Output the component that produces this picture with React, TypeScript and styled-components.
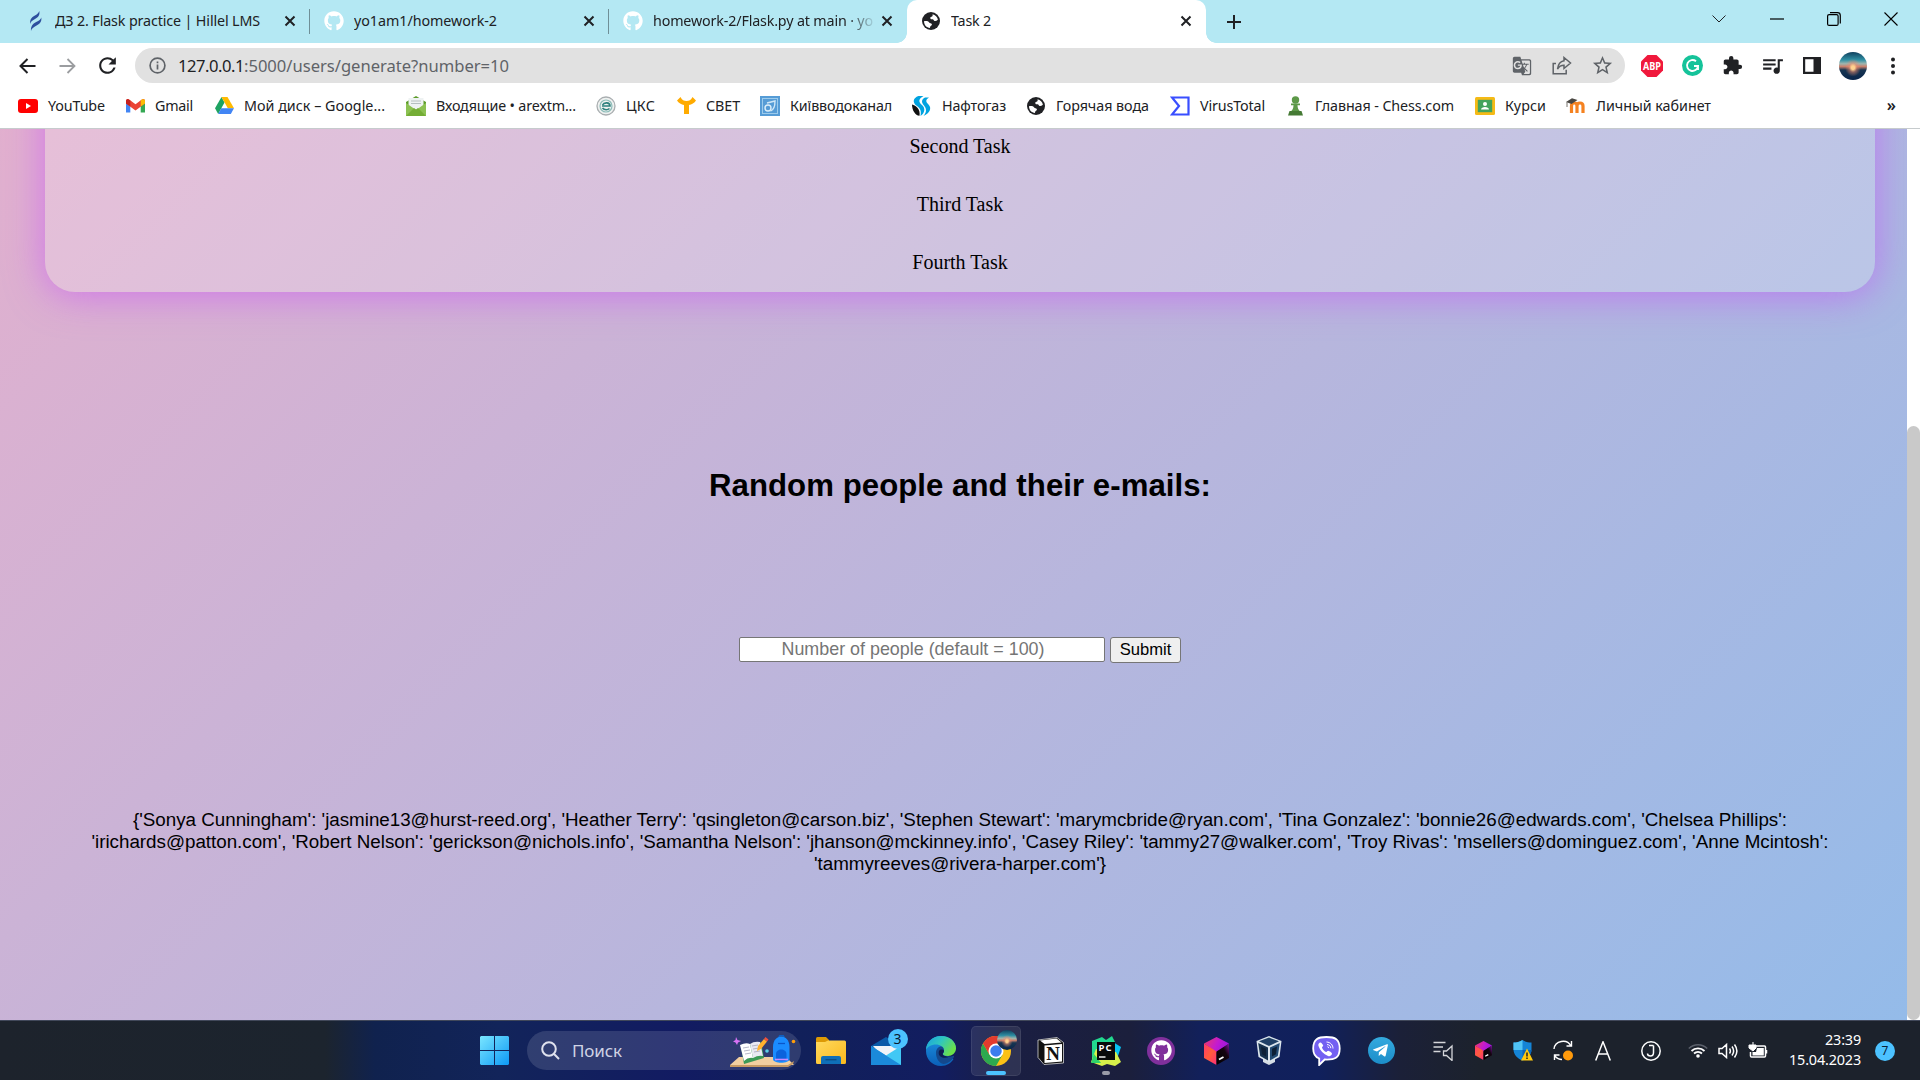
import React, { useLayoutEffect, useRef, useState } from "react";
import styled, { createGlobalStyle, css } from "styled-components";
import { FaGithub, FaTelegramPlane } from "react-icons/fa";
import { MdExtension, MdQueueMusic, MdStarBorder, MdGTranslate, MdRefresh } from "react-icons/md";

const UI = `"Noto Sans", "Open Sans", sans-serif`;
const ARIAL = `"Liberation Sans", Arial, sans-serif`;

const Global = createGlobalStyle`
  * { box-sizing: border-box; }
  html, body { margin: 0; padding: 0; overflow: hidden; }
  svg { display: block; flex: none; }
`;

const FitSpan = styled.span`
  display: inline-block;
  white-space: nowrap;
`;

/* Text tracked so that it spans a given width. */
function Fit({ w, children }: { w: number; children: string }) {
  const ref = useRef<HTMLSpanElement>(null);
  const [ls, setLs] = useState(0);
  useLayoutEffect(() => {
    const el = ref.current;
    if (!el) return;
    const natural = el.getBoundingClientRect().width - ls * children.length;
    setLs((w - natural) / children.length);
  }, [w, children]);
  return <FitSpan ref={ref} style={{ letterSpacing: ls }}>{children}</FitSpan>;
}

const Screen = styled.div`
  width: 1920px;
  height: 1080px;
  display: flex;
  flex-direction: column;
  overflow: hidden;
  background: #fff;
  font-family: ${UI};
  color: #202124;
`;

/* ---------- tab strip ---------- */
const TabStrip = styled.div`
  height: 43px;
  flex: none;
  display: flex;
  background: #b4e8f3;
  padding-left: 11px;
`;
const Tab = styled.div<{ $w: number; $active?: boolean; $sep?: boolean }>`
  position: relative;
  width: ${(p) => p.$w}px;
  height: 43px;
  display: flex;
  align-items: center;
  padding: 0 14px 2px 14px;
  font-size: 14.3px;
  ${(p) =>
    p.$active &&
    css`
      background: #fff;
      border-radius: 10px 10px 0 0;
      &::before, &::after {
        content: "";
        position: absolute;
        bottom: 0;
        width: 10px;
        height: 10px;
      }
      &::before { left: -10px; background: radial-gradient(circle at 0 0, transparent 9.5px, #fff 10px); }
      &::after { right: -10px; background: radial-gradient(circle at 100% 0, transparent 9.5px, #fff 10px); }
    `}
  ${(p) =>
    p.$sep &&
    css`
      &::after {
        content: "";
        position: absolute;
        right: 0;
        top: 9px;
        width: 1px;
        height: 25px;
        background: #6f8f97;
      }
    `}
`;
const TabIcon = styled.span`
  width: 20px;
  display: flex;
  justify-content: center;
  margin-right: 10px;
`;
const TabTitle = styled.span<{ $fade?: boolean }>`
  flex: 1;
  min-width: 0;
  overflow: hidden;
  white-space: nowrap;
  margin-right: 7px;
  ${(p) => p.$fade && css`mask-image: linear-gradient(90deg, #000 88%, transparent 101%);`}
`;
const NewTab = styled.div`
  width: 55px;
  display: flex;
  align-items: center;
  justify-content: center;
`;
const WindowButtons = styled.div`
  margin-left: auto;
  display: flex;
  height: 37px;
`;
const WinBtn = styled.div`
  width: 57.3px;
  display: flex;
  align-items: center;
  justify-content: center;
`;

/* ---------- toolbar ---------- */
const Toolbar = styled.div`
  height: 45px;
  flex: none;
  display: flex;
  align-items: center;
  padding-left: 7px;
`;
const Btn = styled.div<{ $w?: number }>`
  width: ${(p) => p.$w ?? 40}px;
  flex: none;
  display: flex;
  align-items: center;
  justify-content: center;
`;
const Omnibox = styled.div`
  width: 1490px;
  height: 35px;
  margin: 0 7px 0 7px;
  border-radius: 18px;
  background: #e1e1e1;
  display: flex;
  align-items: center;
  padding: 0 3px 0 14px;
  color: #5f6368;
  font-size: 16.6px;
`;
const Url = styled.div`
  flex: 1;
  display: flex;
  padding: 0 0 1px 12px;
  b { font-weight: 400; color: #202124; }
`;
const Avatar = styled.div`
  width: 28px;
  height: 28px;
  border-radius: 50%;
  background:
    radial-gradient(ellipse at 50% 56%, #ffd28f 0 8%, #f08b6c88 20%, transparent 40%),
    linear-gradient(#10405e 0%, #2f8fa3 28%, #9fb5ae 42%, #c9806c 52%, #173552 64%, #08244a 100%);
`;

/* ---------- bookmarks ---------- */
const Bookmarks = styled.div`
  height: 41px;
  flex: none;
  display: flex;
  align-items: center;
  padding: 0 24px 4px 18px;
  border-bottom: 1px solid #c6cbcd;
  font-size: 14.3px;
`;
const Bookmark = styled.div<{ $gap: number }>`
  display: flex;
  align-items: center;
  margin-right: ${(p) => p.$gap}px;
  padding-bottom: 1px;
`;
const BmIcon = styled.span`
  width: 20px;
  height: 20px;
  margin-right: 10px;
  display: flex;
  align-items: center;
  justify-content: center;
`;
const More = styled.span`
  margin-left: auto;
  font-size: 16px;
  font-weight: 600;
  line-height: 20px;
  padding-bottom: 3px;
`;

/* ---------- page ---------- */
const PageRow = styled.div`
  height: 891px;
  flex: none;
  display: flex;
`;
const Page = styled.div`
  width: 1907px;
  overflow: hidden;
  padding: 0 32px 0 45px;
  background: linear-gradient(135deg, #eeaeca, #94bbe9) 0 100% / 1907px 1337px no-repeat;
  color: #000;
  font-family: ${ARIAL};
  display: flex;
  flex-direction: column;
  align-items: center;
`;
const Card = styled.nav`
  width: 100%;
  flex: none;
  height: 363px;
  margin-top: -200px;
  padding-bottom: 1px;
  border-radius: 30px;
  background: rgba(255, 255, 255, 0.2);
  box-shadow: 0 3px 38px 0 rgba(199, 75, 250, 0.6);
  display: flex;
  flex-direction: column;
  align-items: center;
  justify-content: flex-end;
  font-family: "Liberation Serif", "Times New Roman", serif;
  font-size: 20px;
`;
const NavLink = styled.a`
  height: 58px;
  line-height: 58px;
`;
const Heading = styled.h2`
  margin: 175px 0 0;
  font-size: 31.2px;
  line-height: 37px;
`;
const Form = styled.form`
  display: flex;
  margin: 133px 0 0;
`;
const NumberInput = styled.input`
  width: 366px;
  height: 25px;
  border: 1px solid #767676;
  border-radius: 2px;
  padding: 0 18px 1px 0;
  background: #fff;
  text-align: center;
  font: 17.9px/22px ${ARIAL};
  &::placeholder { color: #757575; opacity: 1; }
`;
const Submit = styled.button`
  width: 71px;
  height: 26px;
  margin-left: 5px;
  padding: 0;
  border: 1px solid #767676;
  border-radius: 3px;
  background: #efefef;
  font: 16.6px/22px ${ARIAL};
  color: #000;
`;
const Result = styled.p`
  margin: 146px 0 0;
  font-size: 18.8px;
  line-height: 22px;
  display: flex;
  flex-direction: column;
  align-items: center;
`;
const ScrollTrack = styled.div`
  width: 13px;
  background: #fff;
  padding-top: 297px;
`;
const Thumb = styled.div`
  height: 594px;
  border-radius: 7px;
  background: #c9c9c9;
`;

/* ---------- taskbar ---------- */
const Taskbar = styled.div`
  height: 60px;
  flex: none;
  display: flex;
  align-items: center;
  padding-left: 467px;
  border-top: 1px solid #41485a;
  color: #fff;
  background: linear-gradient(90deg, #1d232c 0, #1c242e 325px, #10224e 375px, #12245a 500px, #121b62 680px,
    #11205a 800px, #121d60 940px, #1a1e42 1010px, #1b1f3c 1130px, #12205a 1200px, #10205c 1320px, #1b2038 1400px, #1c222c 1480px, #1c222c 100%);
`;
const Slot = styled.div<{ $w?: number; $active?: boolean }>`
  position: relative;
  width: ${(p) => p.$w ?? 55}px;
  height: 50px;
  flex: none;
  display: flex;
  align-items: center;
  justify-content: center;
  ${(p) =>
    p.$active &&
    css`
      margin: 0 2.5px;
      border-radius: 5px;
      background: rgba(255, 255, 255, 0.09);
      box-shadow: inset 0 0 0 1px rgba(255, 255, 255, 0.08);
    `}
`;
const Indicator = styled.i<{ $w: number; $c: string }>`
  position: absolute;
  bottom: 1px;
  left: calc(50% - ${(p) => p.$w / 2}px);
  width: ${(p) => p.$w}px;
  height: 4px;
  border-radius: 2px;
  background: ${(p) => p.$c};
`;
const Badge = styled.span`
  position: absolute;
  right: 6px;
  top: 3px;
  width: 20px;
  height: 20px;
  border-radius: 50%;
  background: #4cc2ff;
  color: #0a1a30;
  font-size: 14px;
  line-height: 20px;
  text-align: center;
`;
const ProfileBadge = styled(Avatar)`
  position: absolute;
  right: 4px;
  top: 4px;
  width: 20px;
  height: 20px;
`;
const Search = styled.div`
  width: 274px;
  height: 39px;
  flex: none;
  margin: 0 2.5px 0 5px;
  border-radius: 20px;
  background: rgba(255, 255, 255, 0.13);
  display: flex;
  align-items: center;
  padding-left: 14px;
  font-size: 17px;
  color: #cfd3e4;
`;
const SearchText = styled.span`
  margin-left: 12px;
  flex: 1;
`;
const GhDisc = styled.div`
  width: 28px;
  height: 28px;
  border-radius: 50%;
  background: #80309c;
  display: flex;
  align-items: center;
  justify-content: center;
`;
const TgDisc = styled(GhDisc)`
  width: 27px;
  height: 27px;
  background: linear-gradient(#34aadf, #1c8dc9);
  padding-right: 2px;
`;
const Tray = styled.div`
  display: flex;
  align-items: center;
  margin-left: 14.5px;
`;
const Clock = styled.div`
  margin-left: auto;
  width: 72px;
  flex: none;
  display: flex;
  flex-direction: column;
  align-items: flex-end;
  font-size: 14.4px;
  line-height: 20px;
  padding-bottom: 1px;
`;
const Notify = styled.div`
  width: 20px;
  height: 20px;
  flex: none;
  margin: 0 25px 0 14px;
  border-radius: 50%;
  background: #4cc2ff;
  color: #0a2036;
  font-size: 12px;
  line-height: 20px;
  text-align: center;
`;

/* ---------- drawings ---------- */
const Cross = () => (
  <svg width="12" height="12" viewBox="0 0 12 12" stroke="#202124" strokeWidth="2"><path d="M1.5 1.5l9 9M10.5 1.5l-9 9" /></svg>
);
const Globe = () => (
  <svg width="18" height="18" viewBox="0 0 18 18">
    <circle cx="9" cy="9" r="9" fill="#202124" />
    <path d="M10.500 2.200c2.800.5 5 2.800 5.400 5.600-1.200 1-2.300 1.300-3.400 1.100-.9-.2-.8-1.500-1.900-1.600-1.300 0-2.300-.2-2.300-1.400 0-1.100.9-1.300 1.800-1.500.7-.3.6-1.300.4-2.200z" fill="#fff" />
    <path d="M2 9.200c2.600-.3 4.300 0 5.200 1.300.6.900 2 .6 2.600 1.500.5 1-.6 1.500-1.200 2.100-.5.500-.6 1.200-.6 1.900C4.500 15.700 2 12.800 2 9.200z" fill="#fff" />
  </svg>
);
const Hillel = () => (
  <svg width="13" height="20" viewBox="0 0 13 20" fill="#2d4f9e">
    <path d="M10.300 0C11 4 9.500 6 6 8 3 9.600 1.600 11 1.200 13 .8 9 2 6.800 5.500 4.800 8.200 3.200 9.800 2 10.300 0z" />
    <path d="M12.300 6.500C12.800 10.500 11.200 12.500 7.600 14.500 4.600 16.100 2.500 17.500 2 20 1.600 15.500 3.500 13 7.200 11 10.200 9.500 11.800 8.500 12.300 6.500z" />
  </svg>
);
const YouTube = () => (
  <svg width="20" height="14" viewBox="0 0 20 14"><rect width="20" height="14" rx="3" fill="#f00" /><path d="M8 4l5 3-5 3z" fill="#fff" /></svg>
);
const Gmail = () => (
  <svg width="19" height="14" viewBox="0 0 19 14">
    <path d="M0 2v11.500h4.300V5z" fill="#4285f4" /><path d="M19 2v11.500h-4.300V5z" fill="#34a853" />
    <path d="M0 2C0 0 2 -.5 3.500.8l6 4.500 6-4.500C17 -.5 19 0 19 2v2.500L9.500 11.500 0 4.500z" fill="#ea4335" />
    <path d="M14.700 1.400C16 0 19 -.3 19 2v2.500l-4.300 3z" fill="#fbbc04" /><path d="M0 2C0 1 .6 0 2 0l2.300 1.400v6L0 4.500z" fill="#c5221f" />
  </svg>
);
const Drive = () => (
  <svg width="19" height="17" viewBox="0 0 19 17">
    <path d="M6.500 0L9.500 5.500 3.200 17 0 11.300z" fill="#1ea362" /><path d="M6.500 0h6l6.500 11.300h-6.200z" fill="#ffba00" /><path d="M6.200 11.300H19L15.800 17H3.200z" fill="#4285f4" />
  </svg>
);
const MailBm = () => (
  <svg width="20" height="20" viewBox="0 0 20 20">
    <path d="M0 6l10-6 10 6v13.500H0z" fill="#5d9c2b" /><path d="M2.500 2h15v12h-15z" fill="#eef2f2" /><path d="M5 5h10M5 7.500h10" stroke="#b5bfc0" strokeWidth="1.200" />
    <path d="M0 7l10 7 10-7v13H0z" fill="#8cc152" /><path d="M0 20l8-8 2 1.500L12 12l8 8z" fill="#74ad35" />
  </svg>
);
const Cks = () => (
  <svg width="20" height="20" viewBox="0 0 20 20" fill="none">
    <circle cx="10" cy="10" r="9" fill="#eff1f0" stroke="#a9aeb0" strokeWidth="1.300" /><circle cx="10" cy="10" r="6" stroke="#8dbdb9" strokeWidth="1.200" />
    <path d="M6 10h8c0-4-6-4-7.500-1M6.500 12c2 2.500 5.500 2 7 .5" stroke="#2d817d" strokeWidth="1.600" />
  </svg>
);
const Svet = () => (
  <svg width="19" height="17" viewBox="0 0 19 17"><path d="M0 3.500L3.500 0c1.500 3 3.500 4 6 4s4.500-1 6-4L19 3.500C17.500 6 14.500 7.500 12 8v9H7V8C4.500 7.500 1.500 6 0 3.500z" fill="#ffab00" /></svg>
);
const Kyiv = () => (
  <svg width="20" height="20" viewBox="0 0 20 20" fill="none">
    <rect width="20" height="20" fill="#569cd6" /><rect x="2.500" y="2.500" width="15" height="15" stroke="#9ccbec" />
    <circle cx="8" cy="12" r="3" stroke="#dceefa" strokeWidth="1.400" /><path d="M10.500 15c3.500-1 4.500-4 4.500-10l-8 2" stroke="#cfe7f7" strokeWidth="1.400" />
  </svg>
);
const Naftogaz = () => (
  <svg width="20" height="20" viewBox="0 0 20 20">
    <path d="M6.500 0h5C6 3 6.500 6 10 9c3.500 3 3 8-1.500 11C9.500 15 8.500 12.500 5 10 0 6.500 1 2 6.500 0z" fill="#00a3e0" />
    <path d="M13 1.500h4C13 4 14 6 16.500 8.500 20 12 18 17 11.500 20c3.500-4 3-7.500.5-10.500C9 6 9.500 3.500 13 1.500z" fill="#00a3e0" />
    <path d="M0 8.500c4 1 8.500 4.500 7.500 11.300C3 19.500 0 14 0 8.500z" fill="#111" />
  </svg>
);
const VirusTotal = () => (
  <svg width="20" height="20" viewBox="0 0 20 20" fill="none" stroke="#394eff" strokeWidth="2.200"><path d="M2 1.500h16.500v17H2L9 10z" /></svg>
);
const Pawn = () => (
  <svg width="15" height="20" viewBox="0 0 15 20" fill="#5d9948">
    <circle cx="7.500" cy="4" r="3.700" /><path d="M3 7.500h9v1.800H9.500c0 3 1 5 3 6.200H2.500c2-1.200 3-3.200 3-6.200H3z" /><path d="M1.500 15h12L15 19.500H0z" fill="#457a34" />
  </svg>
);
const Classroom = () => (
  <svg width="20" height="18" viewBox="0 0 20 18">
    <rect width="20" height="18" rx="1.500" fill="#f5ba16" /><rect x="2.800" y="2.800" width="14.400" height="12.400" fill="#43a35c" /><circle cx="10" cy="7" r="2" fill="#fff" /><path d="M6 12.500c0-3.500 8-3.500 8 0z" fill="#fff" />
  </svg>
);
const Moodle = () => (
  <svg width="20" height="15" viewBox="0 0 20 15" fill="none">
    <path d="M5.500 15V8c0-4 5.500-4 5.500 0v7M11 8c0-4 6-4 6 0v7" stroke="#f58220" strokeWidth="3.200" /><path d="M0 4L6 .3 11.500 2 5.500 6z" fill="#4a4742" /><path d="M1 4v5" stroke="#77736d" />
  </svg>
);
const Abp = () => (
  <svg width="22" height="22" viewBox="0 0 22 22">
    <path d="M6.500 0h9L22 6.500v9L15.500 22h-9L0 15.500v-9z" fill="#f0183c" />
    <text x="11" y="14.700" fontFamily="Open Sans" fontWeight="700" fontSize="10" textAnchor="middle" fill="#fff" textLength="18" lengthAdjust="spacingAndGlyphs">ABP</text>
  </svg>
);
const Grammarly = () => (
  <svg width="21" height="21" viewBox="0 0 21 21" fill="none"><circle cx="10.500" cy="10.500" r="10.500" fill="#15c39a" /><path d="M14 6.200A5.500 5.500 0 1 0 16 11h-4M16 11v4" stroke="#fff" strokeWidth="1.900" /></svg>
);
const Cube = ({ s }: { s: number }) => (
  <svg width={s} height={s * 1.12} viewBox="0 0 25 28">
    <defs>
      <linearGradient id="cubeTop" x1="0" y1="0" x2="1" y2=".3"><stop offset="0" stopColor="#f03a62" /><stop offset=".6" stopColor="#c31bd0" /><stop offset="1" stopColor="#a018dc" /></linearGradient>
      <linearGradient id="cubeLeft" x1="0" y1="0" x2="1" y2="1"><stop offset="0" stopColor="#ff3a6a" /><stop offset=".5" stopColor="#ff5c3c" /><stop offset="1" stopColor="#ff2d7a" /></linearGradient>
      <linearGradient id="cubeRight" x1="1" y1="0" x2="0" y2="1"><stop offset="0" stopColor="#7a12a0" /><stop offset=".35" stopColor="#14040f" /><stop offset="1" stopColor="#000" /></linearGradient>
    </defs>
    <path d="M12.500 0L25 6.500l-12.500 9L0 6.500z" fill="url(#cubeTop)" /><path d="M0 6.500l12.500 8V28L0 21z" fill="url(#cubeLeft)" /><path d="M25 6.500V21l-12.500 7V14.500z" fill="url(#cubeRight)" />
    <path d="M15 22.500l4.500-2.500" stroke="#fff" strokeWidth="1.800" />
  </svg>
);
const Windows = () => (
  <svg width="29" height="29" viewBox="0 0 29 29">
    <defs><linearGradient id="win" gradientUnits="userSpaceOnUse" x1="0" y1="0" x2="29" y2="29"><stop offset="0" stopColor="#7ae6ff" /><stop offset="1" stopColor="#0d99f5" /></linearGradient></defs>
    <path d="M1 0h13v14H0V1zM15 0h13l1 1v13H15zM0 15h14v14H1l-1-1zM15 15h14v13l-1 1H15z" fill="url(#win)" />
  </svg>
);
const Desk = () => (
  <svg width="71" height="32" viewBox="0 0 71 32">
    <path d="M9 22h47l8 8H0z" fill="#f2cfa0" /><path d="M0 30h58l6-4-1 3-5 3H0z" fill="#c79a63" />
    <path d="M6 2l1.500 3L11 6 8 7.500 7 10 5.500 7.500 3 6.500 5.500 5z" fill="#d873f5" />
    <path d="M11 12l20-5 3 16-20 6z" fill="#3c9a56" /><path d="M10 10q6-3 10-1l3 14q-5-1-9 3z" fill="#fff" /><path d="M20 9q4-3 10-2l3 14q-5-1-10 2z" fill="#e9e9f2" />
    <path d="M13 13l6-1m-5 4l6-1m-5 4l6-1m1-7l6-1m-5 4l6-1m-5 4l6-1" stroke="#a5a6ba" strokeWidth=".8" />
    <path d="M27 16l1-5 6-7 3 2.500-6 7.500z" fill="#ffb02e" /><path d="M34 4l1.500-2 3 2.500L37 6.500z" fill="#f0503c" />
    <circle cx="37" cy="16" r="1.800" fill="#5ad0e8" /><circle cx="63.500" cy="6.500" r="1.800" fill="#ff9d0a" />
    <path d="M49 2.500c0-3 5-3 5 0" stroke="#0f5fc0" strokeWidth="1.500" fill="none" />
    <path d="M43 12c0-14 16.500-14 16.500 0v12c0 5-16.500 5-16.500 0z" fill="#1a8cff" /><path d="M46 19c0-6 10.500-6 10.500 0v5c0 3-10.500 3-10.500 0z" fill="#0a63dd" /><path d="M45 24.500h13" stroke="#c58bff" strokeWidth="1.600" /><path d="M48 8.500h7" stroke="#0b57c9" strokeWidth="1.300" />
  </svg>
);
const Folder = () => (
  <svg width="30" height="27" viewBox="0 0 30 27">
    <defs><linearGradient id="fold" x1="0" y1="0" x2="1" y2="1"><stop offset="0" stopColor="#ffd95e" /><stop offset="1" stopColor="#fbb91c" /></linearGradient></defs>
    <path d="M0 1.500Q0 0 1.500 0H10l3 3v5H0z" fill="#dd9a05" /><path d="M0 5h9l3-1.500h16.500Q30 3.500 30 5v20.500q0 1.500-1.500 1.500h-27Q0 27 0 25.500z" fill="url(#fold)" />
    <path d="M5 27v-6q0-2 2-2h16q2 0 2 2v6z" fill="#0f6fb8" /><path d="M9.500 22.700h11" stroke="#0b4e86" strokeWidth="1.400" />
  </svg>
);
const Mail = () => (
  <svg width="30" height="28" viewBox="0 0 30 28">
    <path d="M0 9L15 0l15 9v4H0z" fill="#0a5aa8" /><path d="M2 9h26v8L15 24z" fill="#f0f4f8" /><path d="M0 9l15 9.500L0 28z" fill="#2aa0e6" /><path d="M30 9v19H0l30-19z" fill="#41c8f5" /><path d="M0 9l30 19H0z" fill="#1b8ada" />
  </svg>
);
const Edge = () => (
  <svg width="30" height="30" viewBox="0 0 30 30">
    <defs>
      <linearGradient id="edgeA" x1="0" y1="0" x2="1" y2=".5"><stop offset="0" stopColor="#1a9fe0" /><stop offset=".5" stopColor="#2fc6c0" /><stop offset="1" stopColor="#6be04a" /></linearGradient>
      <linearGradient id="edgeB" x1="0" y1="0" x2="0" y2="1"><stop offset="0" stopColor="#1d94e2" /><stop offset="1" stopColor="#0b5fb8" /></linearGradient>
    </defs>
    <path d="M15 0C6 0 0 7 0 15s6 15 15 15c6 0 10-3 12.500-7L22 20l8-7.500C30 6 24 0 15 0z" fill="url(#edgeB)" />
    <path d="M0 14C0 6 7 0 15 0c9 0 15 6 15 12.500C30 17 26 20 22 20c-3.500 0-5-1-5-2 0-.8 1-1.400 1-3.500C18 11 14 8.500 10 8.500 5 8.500 1 11 0 14z" fill="url(#edgeA)" />
    <path d="M10 17c0-4 2.500-6.500 5-6.500 1.800 0 3 1.700 3 4 0 1.500-1.300 2.500-1.300 3.500 0 2.500 6 4 10.800 1.800.8.400.7 1 .2 1.700-2 3-5.700 6-10.200 6.500C13 27.500 10 22 10 17z" fill="#14488c" />
    <path d="M15 13.500c2 0 3 .5 3 1.500 0 1.500-1.300 2-1.300 3 0 1.500 3.500 3 7 2.500-5 2.500-11 1-11-3.500 0-2 1-3.500 2.300-3.500z" fill="#0e1c50" />
  </svg>
);
const Chrome = () => (
  <svg width="30" height="30" viewBox="0 0 48 48">
    <circle cx="24" cy="24" r="24" fill="#fbc116" />
    <path d="M24 24L13.600 30 3.200 12A24 24 0 0 0 24 48l10.400-18z" fill="#2da94f" /><path d="M24 12h20.800A24 24 0 0 0 3.200 12L13.600 30z" fill="#e33b2e" />
    <circle cx="24" cy="24" r="12" fill="#fff" /><circle cx="24" cy="24" r="9.200" fill="#3b7ded" />
  </svg>
);
const PyCharm = () => (
  <svg width="30" height="30" viewBox="0 0 30 30">
    <path d="M1 5l10-4 4 3 6-4 3 6-6 18L1 27z" fill="#22d88f" /><path d="M22 6l8 5-4 12-8-4z" fill="#07c3f2" /><path d="M0 26l5-13 20 3 5 10-6 4-8-2-5 2z" fill="#d7f04a" /><path d="M0 27l3-9 7 9z" fill="#2ed36b" />
    <rect x="6" y="6" width="18" height="18" fill="#0a0a0a" /><text x="7.500" y="15" fontFamily="Open Sans" fontWeight="700" fontSize="9.500" fill="#fff" textLength="13">PC</text><path d="M8 21h6.500" stroke="#fff" strokeWidth="1.400" />
  </svg>
);
const VBox = () => (
  <svg width="30" height="29" viewBox="0 0 30 29">
    <path d="M7 23l6-2 6 2v3l-6 3-6-3z" fill="#d5dde4" /><path d="M13 0l12.500 5-2 16L13 26.500 2.500 21 .5 5z" fill="#dbe5ec" />
    <path d="M13 1.500l10 3.800L13 10 3 5.300z" fill="#1f4066" /><path d="M2.200 7L12 11.500v13L4.200 20z" fill="#16324f" /><path d="M23.800 7L14 11.500v13l7.800-4.500z" fill="#234b73" /><path d="M5 10.500l5 2.300v7.700l-4-2.300zM21 10.500l-5 2.300v7.700l4-2.300z" fill="#0d2036" />
  </svg>
);
const ViberIcon = () => (
  <svg width="29" height="30" viewBox="0 0 29 30" fill="none">
    <path d="M14.500 1C6 1 1.200 3 1.200 12.500c0 6 1.800 8.500 6 10V29l5.500-5.500c10 .5 15-1.500 15-11C27.700 3 23 1 14.500 1z" fill="#7360f2" stroke="#fff" strokeWidth="1.800" />
    <path d="M8 6.500c-1.500 1-2 2-1.500 3.500 1.500 4.500 5 8 9.500 10 2 .8 3-.3 4-2 .3-1-2.500-3-3.800-3.200-1 0-1.200 1.200-2 1.200-1.500-.3-4-3-4.200-4.500 0-.8 1.300-1 1.200-2C11 8.500 9 6 8 6.500z" fill="#fff" />
    <path d="M14.500 6c4 .2 6.500 3 6.500 6.500M15 8.500c2.500.2 3.700 1.700 3.800 3.700M15.500 10.700c.8.100 1.200.6 1.300 1.400" stroke="#fff" strokeWidth="1" />
  </svg>
);
const NotionIcon = () => (
  <svg width="28" height="28" viewBox="0 0 28 28">
    <path d="M1 3L20 .5l6.500 5V26L7 27.500 1 20.500z" fill="#111" stroke="#d5d5d5" strokeWidth=".8" /><path d="M3 3.500L19.500 1.500l5 4L7.500 7z" fill="#fff" /><path d="M7.500 8.500L25 7v17.500L7.500 26z" fill="#fff" />
    <text x="16.200" y="23" fontFamily="Liberation Serif" fontWeight="700" fontSize="19" textAnchor="middle" fill="#111">N</text>
  </svg>
);
const Shield = () => (
  <svg width="20" height="21" viewBox="0 0 20 21">
    <path d="M9.500 0c3 2 6 2.500 9 2.500v7c0 5-4 9-9 11-5-2-9-6-9-11v-7c3 0 6-.5 9-2.500z" fill="#1484d6" /><path d="M9.500 0v10H.5V2.500c3 0 6-.5 9-2.500z" fill="#50c4f5" /><path d="M18.500 10h-9v10.500c5-2 9-6 9-10.500z" fill="#0b65b8" />
    <path d="M14 8.500l6 12H8z" fill="#ffc90e" /><path d="M14 12.500v4M14 17.600v1.400" stroke="#222" strokeWidth="1.500" />
  </svg>
);
const Line = ({ d, w = 20, h = 20, sw = 1.5, c = "#fff", children }: { d: string; w?: number; h?: number; sw?: number; c?: string; children?: React.ReactNode }) => (
  <svg width={w} height={h} viewBox={`0 0 ${w} ${h}`} fill="none" stroke={c} strokeWidth={sw}><path d={d} />{children}</svg>
);

const bookmarks: { icon: React.ReactNode; text: string; w: number; gap: number }[] = [
  { icon: <YouTube />, text: "YouTube", w: 57, gap: 20 },
  { icon: <Gmail />, text: "Gmail", w: 38, gap: 21 },
  { icon: <Drive />, text: "Мой диск – Google...", w: 141, gap: 21 },
  { icon: <MailBm />, text: "Входящие • arextm...", w: 140, gap: 20 },
  { icon: <Cks />, text: "ЦКС", w: 29, gap: 21 },
  { icon: <Svet />, text: "СВЕТ", w: 34, gap: 20 },
  { icon: <Kyiv />, text: "Київводоканал", w: 102, gap: 20 },
  { icon: <Naftogaz />, text: "Нафтогаз", w: 64, gap: 20 },
  { icon: <Globe />, text: "Горячая вода", w: 93, gap: 21 },
  { icon: <VirusTotal />, text: "VirusTotal", w: 65, gap: 20 },
  { icon: <Pawn />, text: "Главная - Chess.com", w: 139, gap: 21 },
  { icon: <Classroom />, text: "Курси", w: 41, gap: 20 },
  { icon: <Moodle />, text: "Личный кабинет", w: 115, gap: 0 },
];

export default function App() {
  return (
    <Screen>
      <Global />
      <TabStrip>
        <Tab $w={299} $sep>
          <TabIcon><Hillel /></TabIcon>
          <TabTitle><Fit w={205}>ДЗ 2. Flask practice | Hillel LMS</Fit></TabTitle>
          <Cross />
        </Tab>
        <Tab $w={299} $sep>
          <TabIcon><FaGithub size={20} color="#fff" /></TabIcon>
          <TabTitle><Fit w={143}>yo1am1/homework-2</Fit></TabTitle>
          <Cross />
        </Tab>
        <Tab $w={298}>
          <TabIcon><FaGithub size={20} color="#fff" /></TabIcon>
          <TabTitle $fade><Fit w={220}>homework-2/Flask.py at main · yo</Fit></TabTitle>
          <Cross />
        </Tab>
        <Tab $w={299} $active>
          <TabIcon><Globe /></TabIcon>
          <TabTitle><Fit w={40}>Task 2</Fit></TabTitle>
          <Cross />
        </Tab>
        <NewTab><Line w={16} h={16} sw={2} c="#202124" d="M8 1v14M1 8h14" /></NewTab>
        <WindowButtons>
          <WinBtn><Line w={14} h={8} sw={1} c="#202124" d="M.5.500L7 7 13.500.500" /></WinBtn>
          <WinBtn><Line w={14} h={2} sw={1.2} c="#000" d="M0 1h14" /></WinBtn>
          <WinBtn><Line w={14} h={14} sw={1.2} c="#000" d="M2.600 2.600h7q1.500 0 1.500 1.500v7.800q0 1.500-1.500 1.500h-7.500q-1.500 0-1.500-1.500v-7.800q0-1.500 1.500-1.500zM3 .7h7.500q2.800 0 2.800 2.800v8" /></WinBtn>
          <WinBtn><Line w={14} h={14} sw={1.1} c="#000" d="M.5.500l13 13M13.500.500l-13 13" /></WinBtn>
        </WindowButtons>
      </TabStrip>

      <Toolbar>
        <Btn><Line w={17} h={16} sw={2} c="#202124" d="M16.500 8H1.500M8.500 1L1.500 8l7 7" /></Btn>
        <Btn><Line w={17} h={16} sw={1.8} c="#9b9da0" d="M.5 8h15M8.500 1l7 7-7 7" /></Btn>
        <Btn $w={41}><MdRefresh size={25} color="#202124" /></Btn>
        <Omnibox>
          <Line w={17} h={17} sw={1.7} c="#5f6368" d="M8.500 7.500v5M8.500 4.500v1.700"><circle cx="8.500" cy="8.500" r="7.400" /></Line>
          <Url><b><Fit w={66}>127.0.0.1</Fit></b><Fit w={265}>:5000/users/generate?number=10</Fit></Url>
          <Btn><MdGTranslate size={20} /></Btn>
          <Btn>
            <Line w={20} h={19} sw={1.5} c="#5f6368" d="M4 7.500H1.200v10.300h13v-4M12 1.500l6.500 5.500L12 12.500V9.300C9 9.300 7 10.500 5.500 13 6 9 8 5.500 12 4.800z" />
          </Btn>
          <Btn><MdStarBorder size={23} /></Btn>
        </Omnibox>
        <Btn><Abp /></Btn>
        <Btn><Grammarly /></Btn>
        <Btn><MdExtension size={21} /></Btn>
        <Btn><MdQueueMusic size={25} /></Btn>
        <Btn><svg width="18" height="17" viewBox="0 0 18 17"><path d="M0 0h18v17H0zM2.200 2.200v12.600h8.300V2.200z" fill="#202124" fillRule="evenodd" /></svg></Btn>
        <Btn $w={42}><Avatar /></Btn>
        <Btn $w={37}><svg width="4" height="18" viewBox="0 0 4 18" fill="#202124"><circle cx="2" cy="2.500" r="2" /><circle cx="2" cy="9" r="2" /><circle cx="2" cy="15.500" r="2" /></svg></Btn>
      </Toolbar>

      <Bookmarks>
        {bookmarks.map((b) => (
          <Bookmark key={b.text} $gap={b.gap}>
            <BmIcon>{b.icon}</BmIcon>
            <Fit w={b.w}>{b.text}</Fit>
          </Bookmark>
        ))}
        <More>»</More>
      </Bookmarks>

      <PageRow>
        <Page>
          <Card>
            <NavLink>Second Task</NavLink>
            <NavLink>Third Task</NavLink>
            <NavLink>Fourth Task</NavLink>
          </Card>
          <Heading><Fit w={502}>Random people and their e-mails:</Fit></Heading>
          <Form>
            <NumberInput type="text" placeholder="Number of people (default = 100)" readOnly />
            <Submit type="button">Submit</Submit>
          </Form>
          <Result>
            <Fit w={1654}>{"{'Sonya Cunningham': 'jasmine13@hurst-reed.org', 'Heather Terry': 'qsingleton@carson.biz', 'Stephen Stewart': 'marymcbride@ryan.com', 'Tina Gonzalez': 'bonnie26@edwards.com', 'Chelsea Phillips':"}</Fit>
            <Fit w={1737}>{"'irichards@patton.com', 'Robert Nelson': 'gerickson@nichols.info', 'Samantha Nelson': 'jhanson@mckinney.info', 'Casey Riley': 'tammy27@walker.com', 'Troy Rivas': 'msellers@dominguez.com', 'Anne Mcintosh':"}</Fit>
            <Fit w={292}>{"'tammyreeves@rivera-harper.com'}"}</Fit>
          </Result>
        </Page>
        <ScrollTrack><Thumb /></ScrollTrack>
      </PageRow>

      <Taskbar>
        <Slot><Windows /></Slot>
        <Search>
          <Line w={19} h={19} sw={2} c="#dfe2ee" d="M12.800 12.800L18 18"><circle cx="8" cy="8" r="6.800" /></Line>
          <SearchText><Fit w={50}>Поиск</Fit></SearchText>
          <Desk />
        </Search>
        <Slot><Folder /></Slot>
        <Slot><Mail /><Badge>3</Badge></Slot>
        <Slot><Edge /></Slot>
        <Slot $w={50} $active><Chrome /><ProfileBadge /><Indicator $w={20} $c="#4cc2ff" /></Slot>
        <Slot><NotionIcon /></Slot>
        <Slot><PyCharm /><Indicator $w={8} $c="#9a9ba8" /></Slot>
        <Slot><GhDisc><FaGithub size={21} color="#fff" /></GhDisc></Slot>
        <Slot><Cube s={25} /></Slot>
        <Slot><VBox /></Slot>
        <Slot><ViberIcon /></Slot>
        <Slot><TgDisc><FaTelegramPlane size={17} color="#fff" /></TgDisc></Slot>
        <Tray>
          <Slot $w={40}><Line sw={1.3} c="#d5d6da" w={21} h={20} d="M.5 1.500h12M.5 6h9.500M.5 10.500h7M10.500 10h3l5.500-5v14.500l-5.500-5h-3z" /></Slot>
          <Slot $w={40}><Cube s={17} /></Slot>
          <Slot $w={40}><Shield /></Slot>
          <Slot $w={40}>
            <Line w={20} h={21} sw={1.4} d="M1 9a9 8.500 0 0 1 17-3M18.500 1v5h-5M1.500 20v-5h5M2 16c2 2.500 4 3.500 7 3.500"><circle cx="15" cy="15.500" r="5" fill="#ff9a0c" stroke="none" /></Line>
          </Slot>
          <Slot $w={40}><Line w={16} h={20} sw={1.5} d="M.7 19.500L8 .8l7.300 18.700M3.300 13h9.400" /></Slot>
          <Slot $w={56}><Line w={20} h={20} sw={1.5} d="M12.500 4.500v7q0 3.500-3 3.500t-3-2.500M8 4.500h4.500"><circle cx="10" cy="10" r="9.200" /></Line></Slot>
          <Slot $w={38}>
            <Line w={20} h={15} sw={1.5} c="#5b606b" d="M.8 5.500a13 13 0 0 1 18.400 0">
              <path d="M3.500 8a9.300 9.300 0 0 1 13 0M6 10.500a6 6 0 0 1 8 0" stroke="#fff" strokeWidth="1.800" /><circle cx="10" cy="13" r="1.800" fill="#fff" stroke="none" />
            </Line>
          </Slot>
          <Slot $w={22}><Line w={20} h={16} sw={1.5} d="M1 5.500h3L8.500 1.500v13L4 10.500H1zM11.500 5.500q1.800 2.500 0 5M14 3.500q3.300 4.500 0 9M16.500 1.500q4.800 6.500 0 13" /></Slot>
          <Slot $w={38}>
            <Line w={20} h={17} sw={1.5} d="M8 4h8.500q1 0 1 1v9q0 1-1 1H3.500q-1 0-1-1v-4M18.500 8v3.500"><path d="M9 6h6.800v7.500H4.500V10H8z" fill="#fff" stroke="none" /><path d="M5 0v3M1 3h7v3L5 9 1 6z" fill="#fff" strokeWidth="1" /></Line>
          </Slot>
        </Tray>
        <Clock><Fit w={36}>23:39</Fit><Fit w={72}>15.04.2023</Fit></Clock>
        <Notify>7</Notify>
      </Taskbar>
    </Screen>
  );
}
